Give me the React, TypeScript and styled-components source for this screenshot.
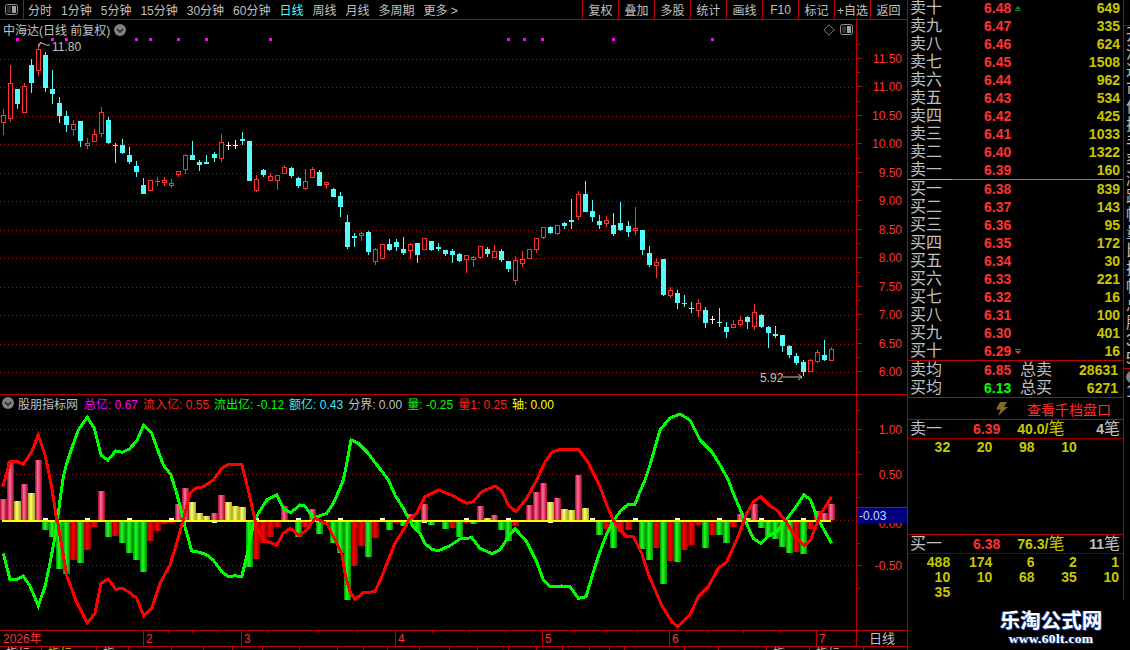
import React from "react";
import styled, { createGlobalStyle } from "styled-components";

const RED = "#ff3232";
const LINE = "#c00000";
const GRAY = "#c0c0c0";
const QTY = "#c8c800";
const SANS = `"Liberation Sans", "Noto Sans CJK SC", sans-serif`;

const GlobalStyle = createGlobalStyle`
  html, body { margin: 0; padding: 0; background: #000; }
`;

const Screen = styled.div`
  position: relative;
  display: flex;
  width: 1130px;
  height: 650px;
  overflow: hidden;
  background: #000;
  color: ${GRAY};
  font-family: ${SANS};
  font-size: 12px;
`;

const ChartColumn = styled.div`
  display: flex;
  flex-direction: column;
  width: 907px;
  flex: none;
  border-right: 1px solid ${LINE};
`;

const Toolbar = styled.div`
  display: flex;
  align-items: stretch;
  height: 19px;
  flex: none;
  padding-right: 1px;
  border-bottom: 1px solid ${LINE};
`;

const ToggleCell = styled.div`
  display: flex;
  align-items: center;
  justify-content: center;
  width: 23px;
  flex: none;
  border-right: 1px solid ${LINE};
`;

const Periods = styled.div`
  display: flex;
  align-items: center;
  gap: 9px;
  padding-left: 4px;
`;

const Period = styled.span<{ $active?: boolean }>`
  white-space: nowrap;
  color: ${(p) => (p.$active ? "#54fcfc" : GRAY)};
`;

const Tools = styled.div`
  display: flex;
  margin-left: auto;
`;

const Tool = styled.div`
  display: flex;
  align-items: center;
  justify-content: center;
  width: 35px;
  white-space: nowrap;
  border-left: 1px solid ${LINE};
`;

const Panel = styled.div<{ $height: number }>`
  display: flex;
  height: ${(p) => p.$height}px;
  flex: none;
  border-bottom: 1px solid ${LINE};
`;

const Plot = styled.div`
  display: flex;
  flex-direction: column;
  width: 856px;
  flex: none;
  border-right: 1px solid ${LINE};
`;

const PlotHead = styled.div`
  display: flex;
  align-items: center;
  gap: 4px;
  height: 17px;
  flex: none;
  padding: 1px 3px 0 3px;
  white-space: nowrap;
`;

const HeadIcons = styled.div`
  display: flex;
  align-items: center;
  gap: 5px;
  margin-left: auto;
`;

const Legend = styled.div`
  display: flex;
  align-items: center;
  gap: 5px;
  height: 16px;
  flex: none;
  padding-left: 2px;
  white-space: nowrap;
`;

const LegendName = styled.span`
  margin: 0 1px 0 -1px;
`;

const LegendItem = styled.span<{ $color: string }>`
  color: ${(p) => p.$color};
`;

const AxisSvg = styled.svg`
  display: block;
  flex: none;
`;

const AxisText = styled.text<{ $color?: string }>`
  font-family: ${SANS};
  font-size: 12px;
  fill: ${(p) => p.$color || RED};
`;

const TimeRow = styled.div`
  display: flex;
  height: 15px;
  flex: none;
  border-bottom: 1px solid ${LINE};
`;

const TimeTrack = styled.div`
  width: 856px;
  flex: none;
  border-right: 1px solid ${LINE};
`;

const TimeName = styled.div`
  flex: 1;
  text-align: center;
  font-size: 13px;
  line-height: 15px;
`;

const TabStrip = styled.div`
  display: flex;
  flex: 1;
  overflow: hidden;
`;

const TabCell = styled.div<{ $w: number; $color?: string }>`
  width: ${(p) => p.$w}px;
  flex: none;
  box-sizing: border-box;
  padding: 1px 0 0 6px;
  line-height: 12px;
  color: ${(p) => p.$color || GRAY};
  border-right: 1px solid ${LINE};
`;

const SidePanel = styled.div`
  width: 216px;
  flex: none;
`;

const Book = styled.div`
  display: flex;
  flex-direction: column;
  height: 600px;
  box-sizing: border-box;
  border-right: 1px solid ${LINE};
  overflow: hidden;
`;

const Levels = styled.div<{ $offset?: number }>`
  flex: none;
  margin-top: ${(p) => p.$offset || 0}px;
`;

const LevelRow = styled.div`
  display: grid;
  grid-template-columns: 74px 40px 1fr;
  align-items: center;
  height: 18px;
  padding: 0 3px 0 2px;
`;

const Label = styled.span`
  font-size: 16px;
  line-height: 18px;
  white-space: nowrap;
`;

const Num = styled.span<{ $color?: string }>`
  font-size: 14px;
  font-weight: bold;
  line-height: 18px;
  color: ${(p) => p.$color || RED};
`;

const PriceCell = styled.span`
  display: flex;
  align-items: center;
  gap: 4px;
`;

const QtyCell = styled(Num)`
  text-align: right;
`;

const Split = styled.div`
  display: flex;
  height: 1px;
  flex: none;
`;

const SplitPart = styled.div<{ $color: string; $w?: number }>`
  background: ${(p) => p.$color};
  ${(p) => (p.$w ? `width: ${p.$w}px;` : "flex: 1;")}
`;

const SummaryBlock = styled.div`
  flex: none;
  border-top: 1px solid ${LINE};
  border-bottom: 1px solid ${LINE};
`;

const SummaryRow = styled.div`
  display: grid;
  grid-template-columns: 74px 36px 40px 1fr;
  align-items: center;
  height: 18px;
  padding: 0 5px 0 2px;
`;

const DepthLink = styled.div`
  display: flex;
  align-items: center;
  height: 21px;
  flex: none;
  padding-left: 88px;
  border-bottom: 1px solid ${LINE};
`;

const DepthText = styled.span`
  margin-left: 19px;
  font-size: 14px;
  color: #ff2a2a;
  white-space: nowrap;
`;

const TickBlock = styled.div<{ $grow?: boolean }>`
  flex: ${(p) => (p.$grow ? "1" : "none")};
  ${(p) => (p.$grow ? "" : `border-top: 1px solid ${LINE};`)}
`;

const TickHead = styled.div`
  display: flex;
  align-items: center;
  height: 18px;
  padding: 0 3px 0 2px;
  border-bottom: 1px dotted ${LINE};
`;

const TickPrice = styled(Num)`
  margin-left: 31px;
`;

const TickAvg = styled(Num)`
  margin-left: 17px;
`;

const TickUnit = styled.span<{ $color: string }>`
  font-size: 16px;
  line-height: 18px;
  color: ${(p) => p.$color};
`;

const TickCount = styled(Num)`
  margin-left: auto;
`;

const TickGrid = styled.div`
  display: grid;
  grid-template-columns: repeat(5, 1fr);
  padding: 1px 4px 0 0;
`;

const TickCell = styled.span`
  height: 15px;
  font-size: 14px;
  font-weight: bold;
  line-height: 15px;
  text-align: right;
  color: ${QTY};
`;

const SideStrip = styled.div`
  display: flex;
  flex-direction: column;
  flex: 1;
  overflow: hidden;
  padding: 25px 0 0 2px;
  font-size: 16px;
  line-height: 18px;
  white-space: nowrap;
`;

const StripRule = styled.div`
  height: 1px;
  flex: none;
  margin: 0 0 0 -2px;
  background: ${LINE};
`;

const StripDot = styled.div`
  width: 12px;
  height: 12px;
  flex: none;
  margin-top: 2px;
  border-radius: 50%;
  background: #808080;
`;

const Watermark = styled.div`
  position: absolute;
  right: 26px;
  top: 606px;
  width: 106px;
  text-align: center;
  color: #fff;
  font-weight: bold;
  text-shadow: 1px 1px 0 #1c3f9c, -1px 0 0 #1c3f9c;
`;

const MarkTitle = styled.div`
  font-family: "Noto Sans CJK SC", sans-serif;
  font-size: 20.5px;
  line-height: 26px;
  white-space: nowrap;
`;

const MarkSite = styled.div`
  font-family: "Liberation Serif", serif;
  font-size: 13.5px;
  line-height: 14px;
  letter-spacing: 0.3px;
  white-space: nowrap;
`;

type Pt = [number, number];

// coordinates below are read off 3x crops: page x = bx + zx/3, page y = by + zy/3
const pts = (bx: number, by: number, list: number[][]): Pt[] =>
  list.map(([x, y]) => [bx + x / 3, by + y / 3] as Pt);

const path = (p: Pt[]) => p.map(([x, y]) => `${x.toFixed(1)},${y.toFixed(1)}`).join(" ");

type Candle = [number, number, number, number, string];

const seg = (by: number, rows: Candle[]): Candle[] =>
  rows.map(([h, t, b, l, k]) => [by + h / 3, by + t / 3, by + b / 3, by + l / 3, k]);

const candles: Candle[] = [
  ...seg(30, [
    [235, 253, 275, 312, "r"], [102, 157, 265, 272, "r"], [175, 175, 218, 233, "c"], [157, 166, 245, 245, "r"],
    [84, 102, 156, 185, "c"], [39, 55, 120, 135, "r"], [64, 72, 170, 183, "c"], [118, 175, 189, 218, "c"],
    [198, 216, 254, 276, "c"], [240, 255, 282, 303, "c"], [267, 280, 296, 315, "r"], [270, 270, 330, 347, "c"],
    [322, 337, 344, 353, "r"], [295, 310, 332, 332, "r"], [228, 244, 308, 317, "r"], [258, 267, 336, 340, "c"],
    [337, 341, 344, 396, "c"], [325, 342, 366, 369, "c"], [348, 372, 393, 400, "c"], [390, 405, 423, 438, "c"],
    [441, 462, 488, 488, "c"], [448, 448, 479, 479, "r"], [438, 449, 452, 465, "r"], [438, 448, 456, 465, "r"],
    [445, 457, 465, 470, "r"], [421, 421, 431, 438, "r"], [370, 373, 416, 429, "r"], [330, 372, 387, 387, "c"],
    [388, 393, 402, 420, "c"], [372, 394, 399, 399, "c"], [363, 369, 381, 393, "c"], [309, 334, 383, 393, "r"],
    [333, 343, 346, 357, "w"], [328, 342, 344, 354, "w"], [303, 324, 330, 342, "c"], [330, 330, 450, 450, "c"],
    [432, 444, 480, 483, "r"], [414, 417, 432, 437, "c"], [425, 436, 449, 449, "r"], [432, 433, 449, 477, "r"],
    [402, 409, 428, 428, "r"], [408, 411, 435, 441, "c"], [438, 441, 465, 471, "c"],
  ]),
  ...seg(120, [
    [145, 181, 204, 207, "r"], [139, 145, 170, 170, "r"], [148, 153, 195, 195, "c"], [184, 184, 191, 204, "r"],
    [202, 204, 228, 228, "c"], [213, 225, 258, 288, "c"], [282, 303, 378, 384, "c"], [336, 345, 351, 378, "c"],
    [334, 337, 346, 360, "r"], [330, 333, 393, 402, "c"], [381, 385, 422, 432, "r"], [369, 370, 414, 417, "r"],
    [354, 369, 387, 390, "c"], [354, 363, 378, 390, "c"], [348, 384, 396, 402, "c"], [366, 370, 389, 414, "r"],
    [366, 366, 402, 426, "c"], [351, 352, 387, 387, "r"], [360, 360, 387, 390, "c"], [366, 378, 384, 390, "c"],
    [387, 387, 399, 405, "c"], [384, 390, 402, 426, "c"], [396, 399, 420, 423, "c"], [403, 403, 416, 456, "r"],
    [405, 408, 416, 438, "r"], [376, 376, 410, 414, "r"], [378, 384, 399, 408, "c"], [372, 391, 411, 411, "r"],
    [384, 390, 417, 423, "c"], [420, 420, 444, 453, "c"], [405, 417, 480, 492, "r"], [390, 415, 429, 438, "r"],
    [384, 385, 414, 414, "r"], [351, 352, 387, 396, "r"], [318, 319, 351, 354, "r"], [315, 319, 336, 339, "c"],
    [313, 313, 339, 342, "r"], [303, 306, 315, 324, "c"], [234, 297, 303, 324, "c"], [210, 219, 288, 297, "r"],
    [180, 219, 273, 273, "c"], [237, 270, 288, 303, "c"],
  ]),
  ...seg(170, [
    [132, 150, 162, 174, "c"], [135, 148, 159, 168, "r"], [126, 162, 189, 195, "c"], [93, 156, 177, 180, "c"],
    [150, 165, 183, 198, "c"], [108, 172, 179, 192, "r"], [177, 177, 237, 252, "c"], [225, 246, 282, 288, "c"],
    [264, 273, 285, 321, "r"], [264, 264, 372, 375, "c"], [348, 357, 375, 381, "r"], [357, 366, 396, 414, "c"],
    [372, 396, 399, 408, "c"], [393, 411, 414, 426, "c"], [384, 397, 419, 438, "r"], [408, 417, 456, 471, "c"],
    [435, 445, 448, 459, "w"], [411, 453, 456, 468, "c"], [453, 468, 483, 501, "c"], [447, 460, 470, 471, "r"],
    [435, 448, 461, 468, "r"], [435, 438, 453, 474, "c"], [399, 424, 467, 477, "r"], [429, 432, 468, 471, "c"],
    [465, 468, 486, 531, "c"], [465, 489, 495, 501, "c"], [492, 492, 525, 543, "c"], [522, 525, 552, 561, "c"],
    [546, 555, 576, 582, "c"], [567, 573, 603, 615, "c"], [564, 568, 604, 604, "r"], [537, 544, 574, 576, "r"],
    [507, 552, 567, 570, "c"], [528, 535, 571, 571, "r"],
  ]),
];

const barKinds: [string, number][] = [
  ["p", 499], ["p", 462], ["y", 501], ["p", 484], ["y", 493], ["p", 460], ["g", 530], ["g", 537], ["g", 569], ["g", 574],
  ["r", 560], ["g", 563], ["r", 550], ["r", 527], ["p", 491], ["g", 537], ["r", 536], ["g", 543], ["g", 553], ["g", 560],
  ["g", 572], ["r", 541], ["r", 531], ["r", 524], ["r", 523], ["p", 504], ["p", 488], ["y", 502], ["y", 513], ["y", 516],
  ["p", 513], ["p", 495], ["y", 502], ["y", 506], ["y", 507], ["g", 567], ["r", 559], ["r", 543], ["r", 537], ["r", 527],
  ["p", 506], ["g", 522], ["g", 537], ["r", 527], ["p", 509], ["g", 534], ["r", 525], ["g", 543], ["g", 553], ["g", 600],
  ["r", 566], ["r", 546], ["g", 557], ["r", 538], ["n", 520], ["g", 530], ["r", 523], ["g", 526], ["p", 514], ["g", 531],
  ["p", 504], ["g", 525], ["r", 522], ["g", 529], ["r", 528], ["g", 537], ["r", 523], ["g", 524], ["p", 506], ["y", 518],
  ["p", 515], ["g", 530], ["g", 541], ["r", 526], ["r", 521], ["p", 505], ["p", 492], ["p", 483], ["y", 502], ["p", 498],
  ["y", 509], ["y", 510], ["p", 475], ["y", 508], ["n", 520], ["g", 535], ["r", 529], ["g", 548], ["r", 532], ["r", 530],
  ["n", 520], ["g", 549], ["g", 560], ["r", 548], ["g", 584], ["r", 561], ["g", 562], ["r", 550], ["r", 545], ["r", 525],
  ["g", 548], ["r", 535], ["g", 535], ["g", 543], ["r", 527], ["p", 514], ["y", 518], ["p", 504], ["g", 528], ["g", 537],
  ["g", 539], ["g", 547], ["g", 553], ["r", 552], ["g", 554], ["r", 529], ["p", 511], ["p", 513], ["p", 504],
];

const greenLine: Pt[] = [
  ...pts(0, 520, [[10, 100], [30, 178], [50, 178], [70, 168], [90, 198], [115, 257], [135, 200], [150, 130], [165, 50], [172, 0]]),
  ...pts(0, 380, [[190, 290], [200, 250], [215, 205], [235, 150], [262, 112], [283, 145], [303, 225], [323, 241], [347, 213], [367, 217], [388, 207], [410, 183], [431, 135], [455, 160], [490, 255], [512, 283], [530, 340], [547, 405], [555, 440]]),
  ...pts(0, 520, [[575, 93], [600, 97], [620, 105], [640, 120], [665, 155], [685, 170], [705, 167], [725, 170], [740, 110], [752, 50], [763, 0]]),
  ...pts(0, 380, [[800, 360], [830, 345], [850, 385], [872, 398]]),
  ...pts(300, 480, [[0, 75], [15, 78], [40, 115], [80, 100], [100, 70], [120, 25], [130, 0]]),
  [347, 462], [351, 440], [358, 443], [367, 452], [377, 465],
  ...pts(300, 480, [[265, 0], [285, 45], [310, 85], [340, 140], [360, 160], [375, 190], [395, 208], [415, 212], [450, 197], [480, 177], [515, 173], [540, 205], [575, 221], [600, 210], [625, 170], [645, 146], [680, 185], [710, 245], [730, 300], [750, 320], [785, 318], [810, 320], [835, 355], [858, 350], [885, 260]]),
  ...pts(600, 480, [[0, 215], [15, 175], [35, 130], [60, 95], [85, 72], [105, 72], [120, 35], [135, 0]]),
  [650, 465], [660, 430], [670, 418], [680, 414], [690, 420], [700, 440], [712, 452], [720, 465],
  ...pts(600, 480, [[385, 0], [400, 40], [430, 110], [460, 175], [482, 190], [510, 165], [530, 155], [555, 125], [585, 85], [612, 45], [632, 60], [650, 110], [675, 155], [695, 190]]),
];

const redLine: Pt[] = [
  ...pts(0, 380, [[8, 320], [30, 245], [50, 243], [70, 253], [95, 215], [115, 165], [135, 225], [155, 320], [170, 420]]),
  ...pts(0, 520, [[172, 0], [200, 165], [225, 235], [262, 310], [285, 280], [303, 190], [325, 177], [347, 208], [367, 205], [390, 218], [410, 235], [431, 287], [455, 265], [480, 190], [510, 135], [530, 70], [550, 0]]),
  ...pts(0, 380, [[570, 340], [585, 325], [610, 320], [640, 300], [665, 265], [685, 253], [725, 253], [745, 330], [765, 420]]),
  ...pts(0, 520, [[768, 20], [790, 60], [830, 75], [850, 40], [870, 25], [895, 45]]),
  ...pts(300, 480, [[0, 165], [20, 150], [45, 115], [80, 130], [105, 180], [125, 220], [135, 280], [150, 335], [165, 358], [190, 338], [225, 335], [245, 290], [265, 240], [285, 190], [310, 150], [330, 115], [350, 100], [375, 50], [415, 30], [460, 48], [500, 70], [520, 65], [545, 35], [585, 18], [605, 32], [625, 75], [648, 95], [680, 55], [710, 0]]),
  [545, 462], [552, 452], [562, 449], [578, 449], [588, 462], [596.7, 480],
  ...pts(600, 480, [[0, 20], [20, 75], [40, 120], [60, 150], [80, 170], [100, 170], [125, 220], [150, 295], [185, 375], [215, 425], [232, 440], [270, 405], [295, 350], [325, 320], [355, 265], [380, 245], [410, 180], [440, 100], [460, 65], [482, 50], [510, 78], [530, 90], [555, 120], [585, 170], [612, 197], [632, 180], [660, 105], [695, 50]]),
];

const slotX = (i: number) => Math.round(3.3 + 7.017 * i - 0.3);

const Dots = ({ y, x1 = 0, x2 = 856 }: { y: number; x1?: number; x2?: number }) => (
  <line x1={x1} x2={x2} y1={y + 0.5} y2={y + 0.5} stroke="#a01414" strokeDasharray="1 3" />
);

const CandleMark = ({ c, x }: { c: Candle; x: number }) => {
  const [h, t, b, l, kind] = c;
  const top = Math.round(t);
  const bot = Math.round(b);
  const color = kind === "r" ? RED : kind === "w" ? "#ffffff" : "#54fcfc";
  const wick = <rect x={x} y={Math.round(h)} width={1} height={Math.max(1, Math.round(l) - Math.round(h))} fill={color} />;
  if (kind === "r" && bot - top > 1) {
    return (
      <g>
        {wick}
        <rect x={x - 1.5} y={top + 0.5} width={4} height={bot - top - 1} fill="#000" stroke={color} />
      </g>
    );
  }
  return (
    <g>
      {wick}
      <rect x={x - 2} y={top} width={5} height={Math.max(1, bot - top)} fill={color} />
    </g>
  );
};

const priceY = (v: number) => Math.round(371 - (v - 6) * 57);
const priceTicks = [6, 6.5, 7, 7.5, 8, 8.5, 9, 9.5, 10, 10.5, 11, 11.5];

const flags = [16, 51, 65, 135, 149, 177, 205, 269, 507, 523, 541, 612, 711];

const MainChart = () => (
  <AxisSvg width={856} height={357} viewBox="0 37 856 357">
    {priceTicks.map((v) => (
      <Dots key={v} y={priceY(v)} />
    ))}
    {flags.map((x) => (
      <rect key={x} x={x} y={37} width={3} height={3} fill="#ff00ff" />
    ))}
    <g shapeRendering="crispEdges">
      {candles.map((c, i) => (
        <CandleMark key={i} c={c} x={slotX(i)} />
      ))}
    </g>
    <path d="M41 41 L39 43 L39 46 M39 43 Q42 41 44 43 T50 44" fill="none" stroke={GRAY} />
    <AxisText x={52} y={50} $color={GRAY}>11.80</AxisText>
    <AxisText x={760} y={381} $color={GRAY}>5.92</AxisText>
    <path d="M783 376 L802 376 M798 373 L802 376 L798 379" fill="none" stroke={GRAY} />
  </AxisSvg>
);

const PriceAxis = () => (
  <AxisSvg width={50} height={374} viewBox="857 20 50 374">
    {priceTicks.map((v) => (
      <g key={v}>
        <rect x={857} y={priceY(v)} width={5} height={1} fill={LINE} />
        <rect x={857} y={priceY(v) - 14} width={3} height={1} fill={LINE} />
        <AxisText x={902} y={priceY(v) + 5} textAnchor="end">{v.toFixed(2)}</AxisText>
      </g>
    ))}
  </AxisSvg>
);

const fills: Record<string, string> = { p: "url(#barPink)", r: "url(#barRed)", g: "url(#barGreen)", y: "url(#barYellow)" };

const Gradient = ({ id, edge, mid }: { id: string; edge: string; mid: string }) => (
  <linearGradient id={id}>
    <stop offset="0" stopColor={edge} />
    <stop offset="0.4" stopColor={mid} />
    <stop offset="1" stopColor={edge} />
  </linearGradient>
);

const ZERO = 520;

const FlowChart = () => (
  <AxisSvg width={856} height={219} viewBox="0 411 856 219">
    <defs>
      <Gradient id="barPink" edge="#a80024" mid="#ff70a0" />
      <Gradient id="barRed" edge="#900000" mid="#ff0000" />
      <Gradient id="barGreen" edge="#008c00" mid="#20ff20" />
      <Gradient id="barYellow" edge="#a8a820" mid="#ffff70" />
    </defs>
    <Dots y={429} />
    <Dots y={474} />
    <Dots y={565} />
    <Dots y={520} x1={832} />
    <g shapeRendering="crispEdges">
      {barKinds.map(([kind, y], i) =>
        kind === "n" ? null : (
          <rect
            key={i}
            x={slotX(i) - 3}
            y={Math.min(y, ZERO)}
            width={7}
            height={Math.abs(y - ZERO)}
            fill={fills[kind]}
          />
        )
      )}
      {barKinds.map(([, y], i) =>
        i % 6 === 0 && i > 0 ? (
          <rect key={i} x={slotX(i) - 2} y={y < ZERO ? ZERO + 1 : ZERO - 2} width={5} height={2} fill="#fff" />
        ) : null
      )}
      <rect x={2} y={ZERO} width={829} height={1.5} fill="#ffff00" />
      <polyline points={path(greenLine)} fill="none" stroke="#00ff00" strokeWidth={3} />
      <polyline points={path(redLine)} fill="none" stroke="#ff0000" strokeWidth={3} />
    </g>
  </AxisSvg>
);

const FlowAxis = () => (
  <AxisSvg width={50} height={235} viewBox="857 395 50 235">
    {[429, 474, 520, 565].map((y) => (
      <rect key={y} x={857} y={y} width={5} height={1} fill={LINE} />
    ))}
    {[452, 497, 543, 588, 410].map((y) => (
      <rect key={y} x={857} y={y} width={3} height={1} fill={LINE} />
    ))}
    <AxisText x={902} y={434} textAnchor="end">1.00</AxisText>
    <AxisText x={902} y={479} textAnchor="end">0.50</AxisText>
    <AxisText x={902} y={570} textAnchor="end">-0.50</AxisText>
    <AxisText x={902} y={528} textAnchor="end">0.00</AxisText>
    <rect x={857} y={507} width={50} height={16} fill="#000080" />
    <rect x={857} y={507} width={50} height={1} fill={LINE} />
    <AxisText x={859} y={520} $color="#c8d4ff">-0.03</AxisText>
  </AxisSvg>
);

const months: [number, string][] = [[143, "2"], [241, "3"], [395, "4"], [542, "5"], [669, "6"], [816, "7"]];
const timeTicks = [168, 192, 217, 267, 318, 357, 432, 469, 505, 574, 606, 637, 707, 743, 780];

const TimeAxis = () => (
  <AxisSvg width={856} height={15} viewBox="0 631 856 15">
    <AxisText x={3} y={643}>2026年</AxisText>
    {timeTicks.map((x) => (
      <rect key={x} x={x} y={631} width={1} height={2} fill={LINE} />
    ))}
    {months.map(([x, m]) => (
      <g key={m}>
        <rect x={x} y={631} width={1} height={15} fill={LINE} />
        <AxisText x={x + 3} y={643}>{m}</AxisText>
      </g>
    ))}
  </AxisSvg>
);

const ToggleIcon = () => (
  <svg width={13} height={11} viewBox="0 0 13 11">
    <rect x={0.5} y={0.5} width={12} height={10} rx={2} fill="none" stroke="#909090" />
    <rect x={2} y={2} width={4} height={7} fill="#303030" />
    <rect x={7} y={2} width={4} height={7} fill="#a0a0a0" />
  </svg>
);

const DiamondIcon = () => (
  <svg width={12} height={12} viewBox="0 0 12 12">
    <path d="M6 0.8 L11.2 6 L6 11.2 L0.8 6 Z" fill="none" stroke="#808080" />
  </svg>
);

const DropIcon = () => (
  <svg width={12} height={12} viewBox="0 0 12 12">
    <circle cx={6} cy={6} r={6} fill="#808080" />
    <path d="M3 5 L6 8 L9 5" fill="none" stroke="#202020" strokeWidth={1.4} />
  </svg>
);

const BoltIcon = () => (
  <svg width={12} height={14} viewBox="0 0 12 14">
    <path d="M4 0 L11 0 L8 5 L12 5 L2 14 L4.5 7.5 L0 7.5 Z" fill="#7d6c2c" />
  </svg>
);

const UpTick = () => (
  <svg width={6} height={5} viewBox="0 0 6 5">
    <path d="M3 0 L6 3 L0 3 Z M0 4 H6 V5 H0 Z M2.5 2 H3.5 V4 H2.5 Z" fill="#0a8a28" />
  </svg>
);

const DownTick = () => (
  <svg width={6} height={5} viewBox="0 0 6 5">
    <path d="M0 0 H6 V1 H0 Z M0 2 H6 L3 5 Z" fill={RED} />
  </svg>
);

const sells: [string, string, string][] = [
  ["卖十", "6.48", "649"], ["卖九", "6.47", "335"], ["卖八", "6.46", "624"], ["卖七", "6.45", "1508"], ["卖六", "6.44", "962"],
  ["卖五", "6.43", "534"], ["卖四", "6.42", "425"], ["卖三", "6.41", "1033"], ["卖二", "6.40", "1322"], ["卖一", "6.39", "160"],
];

const buys: [string, string, string][] = [
  ["买一", "6.38", "839"], ["买二", "6.37", "143"], ["买三", "6.36", "95"], ["买四", "6.35", "172"], ["买五", "6.34", "30"],
  ["买六", "6.33", "221"], ["买七", "6.32", "16"], ["买八", "6.31", "100"], ["买九", "6.30", "401"], ["买十", "6.29", "16"],
];

const Level = ({ row, mark }: { row: [string, string, string]; mark?: React.ReactNode }) => (
  <LevelRow>
    <Label>{row[0]}</Label>
    <PriceCell>
      <Num>{row[1]}</Num>
      {mark}
    </PriceCell>
    <QtyCell $color={QTY}>{row[2]}</QtyCell>
  </LevelRow>
);

const periods = ["分时", "1分钟", "5分钟", "15分钟", "30分钟", "60分钟", "日线", "周线", "月线", "多周期", "更多 >"];
const tools = ["复权", "叠加", "多股", "统计", "画线", "F10", "标记", "+自选", "返回"];

const legend: [string, string][] = [
  ["总亿: 0.67", "#ff00ff"], ["流入亿: 0.55", "#ff2020"], ["流出亿: -0.12", "#00ff00"], ["额亿: 0.43", "#40e8ff"],
  ["分界: 0.00", GRAY], ["量: -0.25", "#00ff00"], ["量1: 0.25", "#ff2020"], ["轴: 0.00", "#ffff00"],
];

const tabs: [number, string, string?][] = [
  [42, "指标"], [55, "指标", "#c8c800"], [32, "指"], [43], [32], [29], [30], [37], [38], [26], [24], [32], [30], [28], [31], [28], [26],
  [27], [20], [15], [60], [34], [48], [43, "指", GRAY], [54, "指标", GRAY],
].map((t) => t as [number, string, string?]);

const stripText = "开流通市值换手率涨跌幅量比振幅总股本市盈净资产".split("");

const App = () => (
  <Screen>
    <GlobalStyle />
    <ChartColumn>
      <Toolbar>
        <ToggleCell>
          <ToggleIcon />
        </ToggleCell>
        <Periods>
          {periods.map((p) => (
            <Period key={p} $active={p === "日线"}>{p}</Period>
          ))}
        </Periods>
        <Tools>
          {tools.map((t) => (
            <Tool key={t}>{t}</Tool>
          ))}
        </Tools>
      </Toolbar>
      <Panel $height={374}>
        <Plot>
          <PlotHead>
            中海达(日线 前复权)
            <DropIcon />
            <HeadIcons>
              <DiamondIcon />
              <ToggleIcon />
            </HeadIcons>
          </PlotHead>
          <MainChart />
        </Plot>
        <PriceAxis />
      </Panel>
      <Panel $height={235}>
        <Plot>
          <Legend>
            <DropIcon />
            <LegendName>股朋指标网</LegendName>
            {legend.map(([text, color]) => (
              <LegendItem key={text} $color={color}>{text}</LegendItem>
            ))}
          </Legend>
          <FlowChart />
        </Plot>
        <FlowAxis />
      </Panel>
      <TimeRow>
        <TimeTrack>
          <TimeAxis />
        </TimeTrack>
        <TimeName>日线</TimeName>
      </TimeRow>
      <TabStrip>
        {tabs.map(([w, text, color], i) => (
          <TabCell key={i} $w={w} $color={color}>{text}</TabCell>
        ))}
      </TabStrip>
    </ChartColumn>
    <SidePanel>
      <Book>
        <Levels $offset={-1}>
          {sells.map((row, i) => (
            <Level key={row[0]} row={row} mark={i === 0 ? <UpTick /> : undefined} />
          ))}
        </Levels>
        <Split>
          <SplitPart $color="#d8a040" $w={44} />
          <SplitPart $color="#5890c8" />
        </Split>
        <Levels>
          {buys.map((row, i) => (
            <Level key={row[0]} row={row} mark={i === 9 ? <DownTick /> : undefined} />
          ))}
        </Levels>
        <SummaryBlock>
          <SummaryRow>
            <Label>卖均</Label>
            <Num>6.85</Num>
            <Label>总卖</Label>
            <QtyCell $color={QTY}>28631</QtyCell>
          </SummaryRow>
          <SummaryRow>
            <Label>买均</Label>
            <Num $color="#00ff00">6.13</Num>
            <Label>总买</Label>
            <QtyCell $color={QTY}>6271</QtyCell>
          </SummaryRow>
        </SummaryBlock>
        <DepthLink>
          <BoltIcon />
          <DepthText>查看千档盘口</DepthText>
        </DepthLink>
        <TickBlock $grow>
          <TickHead>
            <Label>卖一</Label>
            <TickPrice>6.39</TickPrice>
            <TickAvg $color={QTY}>40.0/</TickAvg>
            <TickUnit $color={QTY}>笔</TickUnit>
            <TickCount $color={GRAY}>4</TickCount>
            <TickUnit $color={GRAY}>笔</TickUnit>
          </TickHead>
          <TickGrid>
            {["32", "20", "98", "10"].map((n, i) => (
              <TickCell key={i}>{n}</TickCell>
            ))}
          </TickGrid>
        </TickBlock>
        <TickBlock>
          <TickHead>
            <Label>买一</Label>
            <TickPrice>6.38</TickPrice>
            <TickAvg $color={QTY}>76.3/</TickAvg>
            <TickUnit $color={QTY}>笔</TickUnit>
            <TickCount $color={GRAY}>11</TickCount>
            <TickUnit $color={GRAY}>笔</TickUnit>
          </TickHead>
          <TickGrid>
            {["488", "174", "6", "2", "1", "10", "10", "68", "35", "10", "35"].map((n, i) => (
              <TickCell key={i}>{n}</TickCell>
            ))}
          </TickGrid>
        </TickBlock>
      </Book>
    </SidePanel>
    <SideStrip>
      <StripRule />
      {stripText.slice(0, 17).map((c, i) => (
        <span key={i}>{c}</span>
      ))}
      <span>3</span>
      <span>5</span>
      <StripRule />
      <StripDot />
      <span>1</span>
    </SideStrip>
    <Watermark>
      <MarkTitle>乐淘公式网</MarkTitle>
      <MarkSite>www.60lt.com</MarkSite>
    </Watermark>
  </Screen>
);

export default App;
